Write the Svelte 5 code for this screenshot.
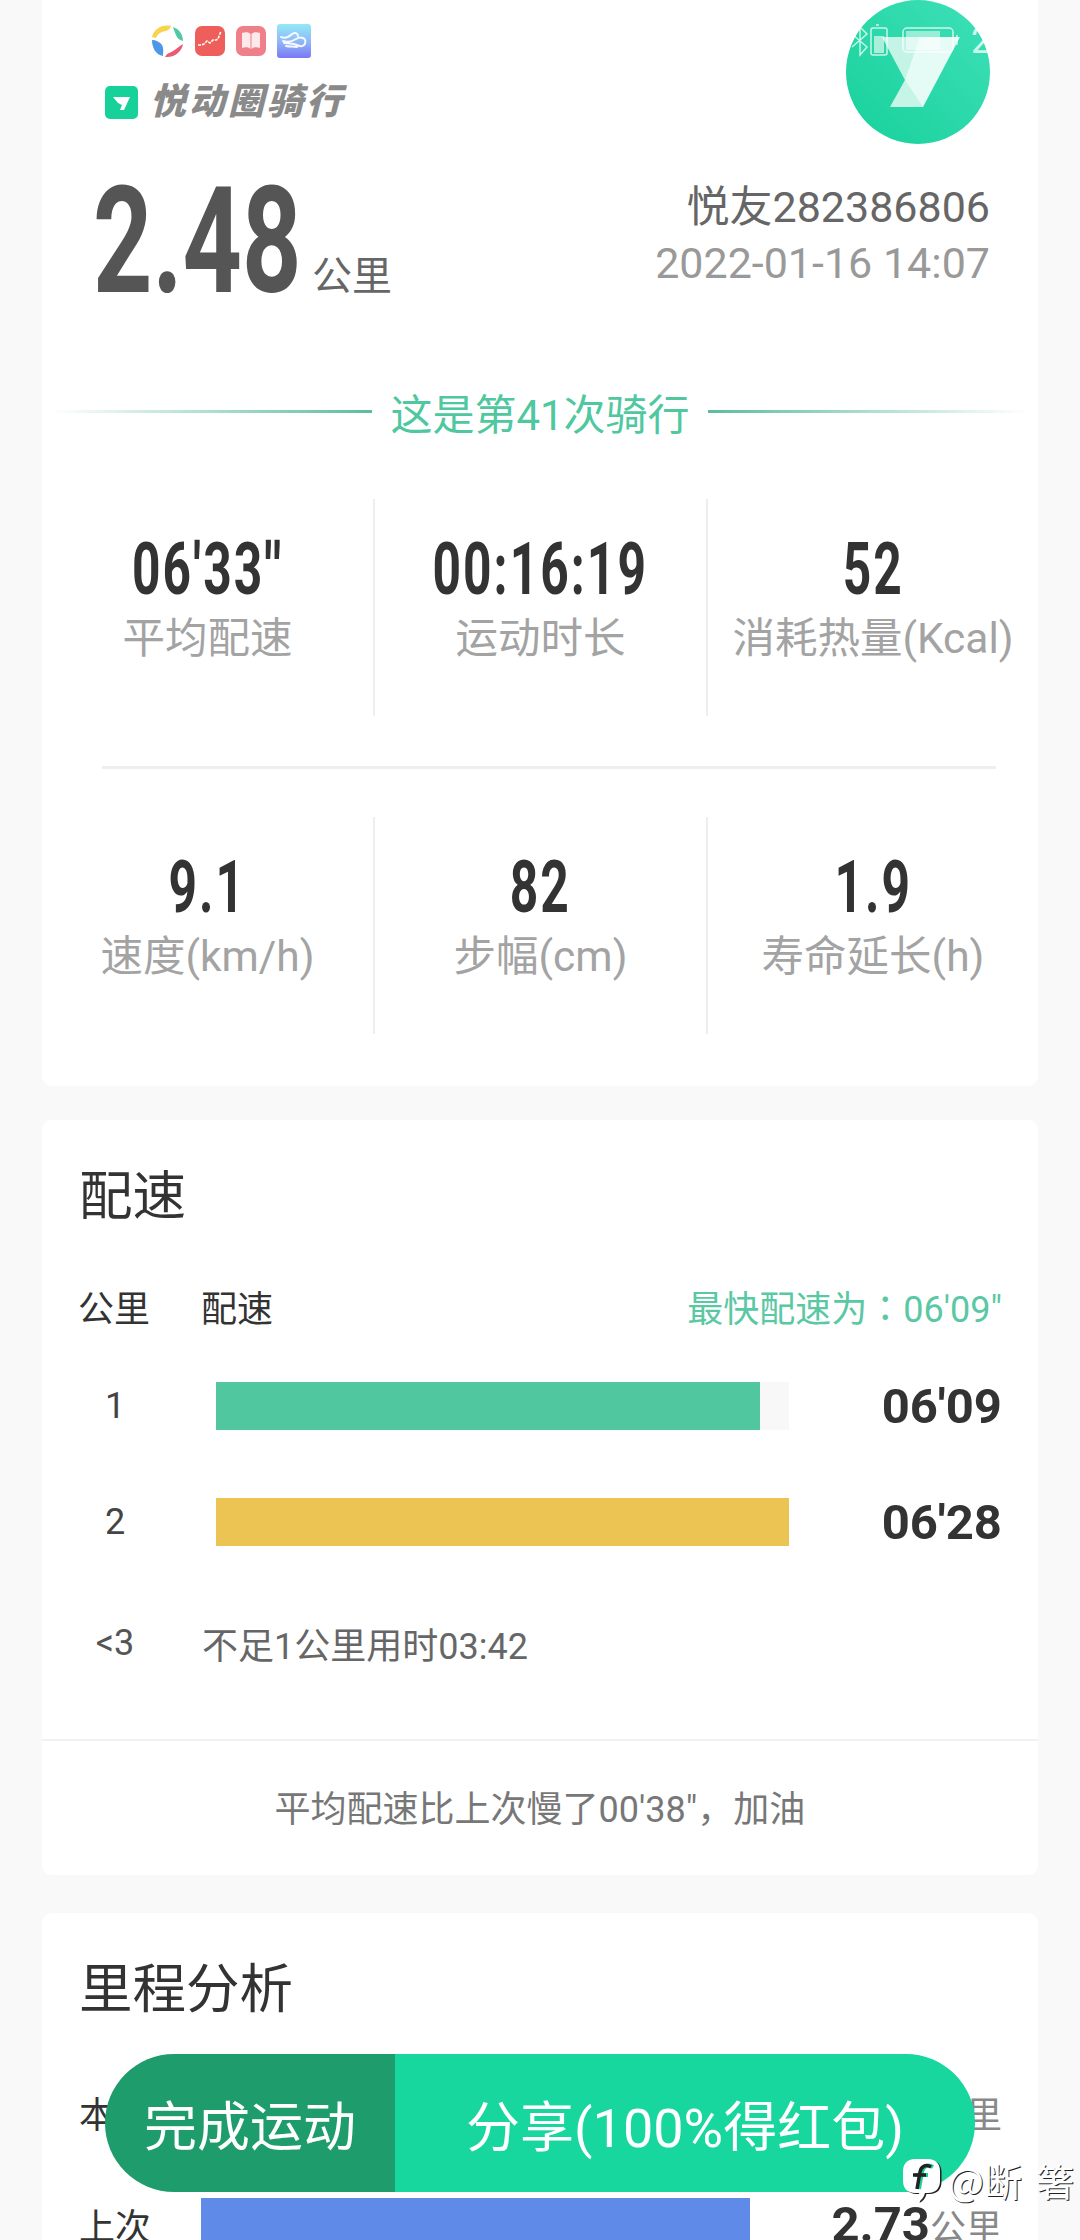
<script>
  const row1 = [
    { v: "06'33''", l: '平均配速' },
    { v: '00:16:19', l: '运动时长' },
    { v: '52', l: '消耗热量(Kcal)' }
  ];
  const row2 = [
    { v: '9.1', l: '速度(km/h)' },
    { v: '82', l: '步幅(cm)' },
    { v: '1.9', l: '寿命延长(h)' }
  ];
</script>

<div class="page">
  <section class="card hero">
    <div class="top">
      <div class="brand">
        <div class="apps">
          <svg width="33" height="34" viewBox="0 0 33 34">
            <path d="M1 13C3 5 11 0 20 2c-1 4-5 5-9 6-3 1-5 3-6 6z" fill="#f7d44c"/>
            <path d="M22 3c6 2 10 7 10 14-4-1-6-3-7-6-1-2-2-5-3-8z" fill="#4fc9a1"/>
            <path d="M32 20c-1 7-8 14-18 13 2-4 5-4 8-6 4-2 6-5 10-7z" fill="#ea5a72"/>
            <path d="M1 16c4 0 8 2 10 5 2 4 1 8 1 11C5 31 1 24 1 16z" fill="#4d96e8"/>
          </svg>
          <svg width="30" height="30" viewBox="0 0 30 30"><rect width="30" height="30" rx="7" fill="#ee5f5b"/><path d="M3 19l3 0 3-1 3-3 3 2 3-3 3 0 2-1 3-8" fill="none" stroke="#fff" stroke-width="1.600" stroke-dasharray="3 1"/></svg>
          <svg width="30" height="30" viewBox="0 0 30 30"><rect width="30" height="30" rx="7" fill="#ef7f88"/><path d="M6 7c3-1 7-1 8.500 1v15C13 21 9 21 6 22zM24 7c-3-1-7-1-8.500 1v15c1.500-2 5.500-2 8.500-1z" fill="#fde9ea"/></svg>
          <svg width="34" height="34" viewBox="0 0 34 34"><defs><linearGradient id="cl" x1="0" y1="0" x2="0" y2="1"><stop offset="0" stop-color="#93e9f7"/><stop offset=".55" stop-color="#8fb4f6"/><stop offset="1" stop-color="#7a78f5"/></linearGradient></defs><rect width="34" height="34" rx="3" fill="url(#cl)"/><path d="M4 13c5 2 8 0 11-3 3-2 6-1 6 2M6 17c6 2 10 0 13-2 3-2 5-2 7-1 3 1 3 5 1 7-2 2-5 1-7 0-4-2-8-1-13-2M9 22c4 1 8 0 11 1" fill="none" stroke="#fff" stroke-width="2" stroke-linecap="round" opacity=".9"/></svg>
        </div>
        <div class="word">
          <svg width="33" height="33" viewBox="0 0 33 33"><rect width="33" height="33" rx="5" fill="#17d19b"/><path d="M8 11h17l-6 13h-4l2-5-4-2z" fill="#fff"/></svg>
          <span>悦动圈骑行</span>
        </div>
      </div>
      <div class="avatar">
        <svg width="144" height="144" viewBox="0 0 144 144">
          <defs><linearGradient id="av" x1="1" y1="0" x2="0" y2="1"><stop offset="0" stop-color="#3fe0b8"/><stop offset="1" stop-color="#17d19b"/></linearGradient></defs>
          <circle cx="72" cy="72" r="72" fill="url(#av)"/>
          <path d="M36 37H114L77 107H44L59 80Z" fill="#fff" opacity=".88"/>
          <path d="M36 37H74L59 80Z" fill="#17d19b" opacity=".16"/>
          <path d="M44 107L59 80 77 107Z" fill="#17d19b" opacity=".14"/>
          <g fill="none" stroke="#fff" stroke-width="1.500" opacity=".75">
            <path d="M6 34l15 13-7 8V27l7 7-15 13"/>
            <rect x="25" y="28" width="16" height="27" rx="2"/>
            <path d="M33 25h-3"/>
            <rect x="57" y="28" width="50" height="24" rx="4"/>
            <path d="M111 35v10"/>
          </g>
          <rect x="28" y="36" width="10" height="17" fill="#fff" opacity=".6"/>
          <rect x="60" y="31" width="34" height="19" fill="#fff" opacity=".5"/>
          <text x="125" y="53" class="clock">2</text>
        </svg>
      </div>
    </div>

    <div class="summary">
      <div class="dist"><span class="big">2.48</span><span class="unit">公里</span></div>
      <div class="who">
        <div class="name">悦友282386806</div>
        <div class="date">2022-01-16 14:07</div>
      </div>
    </div>

    <div class="count">
      <i class="line left"></i>
      <span>这是第41次骑行</span>
      <i class="line right"></i>
    </div>

    <div class="stats">
      {#each row1 as s}
        <div class="stat"><div class="val"><span>{s.v}</span></div><div class="lab">{s.l}</div></div>
      {/each}
    </div>
    <div class="rule"></div>
    <div class="stats">
      {#each row2 as s}
        <div class="stat"><div class="val"><span>{s.v}</span></div><div class="lab">{s.l}</div></div>
      {/each}
    </div>
  </section>

  <section class="card pace">
    <h2>配速</h2>
    <div class="phead">
      <span class="c1">公里</span><span class="c2">配速</span>
      <span class="fast">最快配速为<span class="colon">：</span>06'09"</span>
    </div>
    <div class="prow">
      <span class="num">1</span>
      <div class="track"><div class="fill green"></div></div>
      <b>06'09</b>
    </div>
    <div class="prow second">
      <span class="num">2</span>
      <div class="track"><div class="fill yellow"></div></div>
      <b>06'28</b>
    </div>
    <div class="short"><span class="num">&lt;3</span><span class="txt">不足1公里用时03:42</span></div>
    <div class="foot">平均配速比上次慢了00'38"，加油</div>
  </section>

  <section class="card mile">
    <h2>里程分析</h2>
    <div class="mrow now"><span class="ml">本次</span><div class="mbar"></div><span class="mv"><span class="unit2">公里</span></span></div>
    <div class="mrow"><span class="ml">上次</span><div class="mbar blue"></div><span class="mv"><b>2.73</b><span class="unit2">公里</span></span></div>
  </section>

  <div class="cta">
    <div class="done">完成运动</div>
    <div class="share">分享(100%得红包)</div>
  </div>

  <div class="mark">
    <svg width="40" height="46" viewBox="0 0 40 46">
      <path d="M13 1h13c8 0 12 5 12 12v10c0 7-4 12-12 12h-3c-1 4-3 7-7 9 1-3 2-6 1-9h-4C5 35 1 30 1 23V13C1 6 5 1 13 1z" fill="#222" transform="translate(1.500 1)"/>
      <path d="M13 1h13c8 0 12 5 12 12v10c0 7-4 12-12 12h-3c-1 4-3 7-7 9 1-3 2-6 1-9h-4C5 35 1 30 1 23V13C1 6 5 1 13 1z" fill="#fff"/>
      <path d="M29 9c-5-3-10-1-11 5l-3 17M11 17h13" fill="none" stroke="#17d19b" stroke-width="4" transform="translate(2 0)"/>
      <path d="M29 9c-5-3-10-1-11 5l-3 17M11 17h13" fill="none" stroke="#222" stroke-width="3.500"/>
    </svg>
    <span>@断</span><span class="last">箸</span>
  </div>
</div>

<style>
  :global(body) { margin: 0; background: #f9f9f9; }
  .page {
    position: relative;
    width: 1080px;
    height: 2240px;
    overflow: hidden;
    background: #f9f9f9;
    font-family: Roboto, "Noto Sans CJK SC", sans-serif;
    display: flex;
    flex-direction: column;
    align-items: center;
  }
  .card {
    width: 996px;
    background: #fff;
    box-sizing: border-box;
    border-radius: 10px;
    flex: none;
  }
  .hero { height: 1086px; border-radius: 0 0 10px 10px; }
  .top { display: flex; justify-content: space-between; padding: 0 48px 0 63px; height: 144px; }
  .brand { display: flex; flex-direction: column; padding-top: 24px; }
  .apps { display: flex; align-items: center; gap: 11px; padding-left: 46px; height: 34px; }
  .word { display: flex; align-items: center; gap: 12px; margin-top: 28px; height: 33px; }
  .word span {
    font-size: 36px; font-weight: 900; font-style: italic; color: #8a8a8a;
    letter-spacing: 3px; line-height: 33px;
  }
  .avatar { width: 144px; height: 144px; }
  .avatar svg { display: block; overflow: visible; }
  .clock { font-size: 36px; fill: #fff; opacity: .75; }
  .summary { display: flex; justify-content: space-between; padding: 24px 48px 0 51px; height: 160px; box-sizing: border-box; }
  .dist { display: flex; align-items: flex-end; height: 128px; margin-top: 10px; }
  .big {
    display: inline-block; font-size: 148px; font-weight: 700; color: #555;
    line-height: 128px; width: 219px; transform: scaleX(0.7); transform-origin: left center;
  }
  .unit { font-size: 40px; color: #666; line-height: 46px; margin-bottom: 6px; }
  .who { text-align: right; padding-top: 11px; }
  .name { font-size: 43px; color: #666; line-height: 56px; }
  .date { font-size: 43px; color: #999; line-height: 56px; }
  .count { display: flex; align-items: center; justify-content: center; gap: 18px; margin-top: 82px; height: 50px; }
  .count span { font-size: 42px; color: #4fc79f; white-space: nowrap; }
  .line { flex: 1; height: 3px; }
  .left { background: linear-gradient(90deg, #fff, #5bbd9b); margin-left: 10px; }
  .right { background: linear-gradient(90deg, #5bbd9b, #fff); margin-right: 10px; }
  .stats { display: grid; grid-template-columns: 333px 333px 330px; height: 217px; margin-top: 63px; }
  .rule + .stats { margin-top: 48px; }
  .stat { border-right: 2px solid #eeeeee; text-align: center; box-sizing: border-box; }
  .stat:last-child { border-right: none; }
  .val { height: 96px; padding-top: 31px; box-sizing: border-box; font-size: 72px; font-weight: 700; color: #333; line-height: 80px; }
  .val span { display: inline-block; transform: scaleX(0.69); letter-spacing: 3px; white-space: nowrap; }
  .lab { font-size: 42.500px; color: #a3a3a3; line-height: 50px; margin-top: 19px; white-space: nowrap; }
  .rule { height: 3px; background: #eee; margin: 50px 42px 0 60px; }

  .pace { height: 755px; margin-top: 34px; position: relative; }
  h2 { margin: 0; font-size: 53.500px; font-weight: 400; color: #333; padding: 44px 0 0 37px; line-height: 66px; }
  .phead { display: flex; align-items: center; margin-top: 51px; padding: 0 36px 0 36px; font-size: 36px; color: #333; height: 50px; }
  .c1 { width: 123px; }
  .fast { margin-left: auto; color: #5ac8a4; white-space: nowrap; }
  .colon { font-family: "Noto Sans CJK TC", sans-serif; }
  .prow { display: flex; align-items: center; height: 48px; padding: 0 36px 0 0; margin-top: 51px; }
  .prow.second { margin-top: 68px; }
  .num { width: 146px; text-align: center; font-size: 36px; color: #444; flex: none; }
  .track { width: 573px; height: 48px; margin-left: 28px; background: #f8f8f8; flex: none; }
  .fill { height: 100%; }
  .green { width: 544px; background: #51c7a0; }
  .yellow { width: 573px; background: #ecc454; }
  .prow b { margin-left: auto; font-size: 49px; color: #333; font-weight: 700; }
  .short { display: flex; align-items: center; margin-top: 72px; height: 50px; font-size: 36px; color: #666; }
  .short .num { color: #555; }
  .short .txt { margin-left: 14px; white-space: nowrap; }
  .foot { position: absolute; left: 0; right: 0; bottom: 0; height: 136px; padding-bottom: 4px; border-top: 2px solid #f2f2f2; box-sizing: border-box; display: flex; align-items: center; justify-content: center; font-size: 36px; color: #777; }

  .mile { margin-top: 38px; height: 400px; }
  .mrow { display: flex; align-items: center; height: 52px; padding: 0 36px 0 37px; font-size: 36px; color: #333; }
  .mrow.now { margin-top: 63px; margin-bottom: 60px; }
  .ml { width: 122px; flex: none; }
  .mbar { width: 549px; height: 52px; flex: none; }
  .blue { background: #608ae8; }
  .mv { margin-left: auto; display: flex; align-items: baseline; }
  .mv b { font-size: 49px; color: #333; }
  .unit2 { font-size: 36px; color: #888; }

  .cta { position: absolute; left: 105px; top: 2054px; width: 870px; height: 138px; border-radius: 69px; overflow: hidden; display: flex; color: #fff; }
  .cta div { display: flex; align-items: center; justify-content: center; }
  .done { width: 290px; background: #1e9c6b; font-size: 53px; }
  .share { flex: 1; background: #17d69e; font-size: 54px; }

  .mark { position: absolute; left: 902px; top: 2158px; display: flex; align-items: flex-start; font-size: 38px; line-height: 44px; color: #fff; font-family: "Noto Sans CJK SC", sans-serif; text-shadow: 1px 1px 0 #222; white-space: nowrap; }
  .mark svg { margin-right: 6px; flex: none; }
  .last { margin-left: 14px; color: #fff; }
</style>
